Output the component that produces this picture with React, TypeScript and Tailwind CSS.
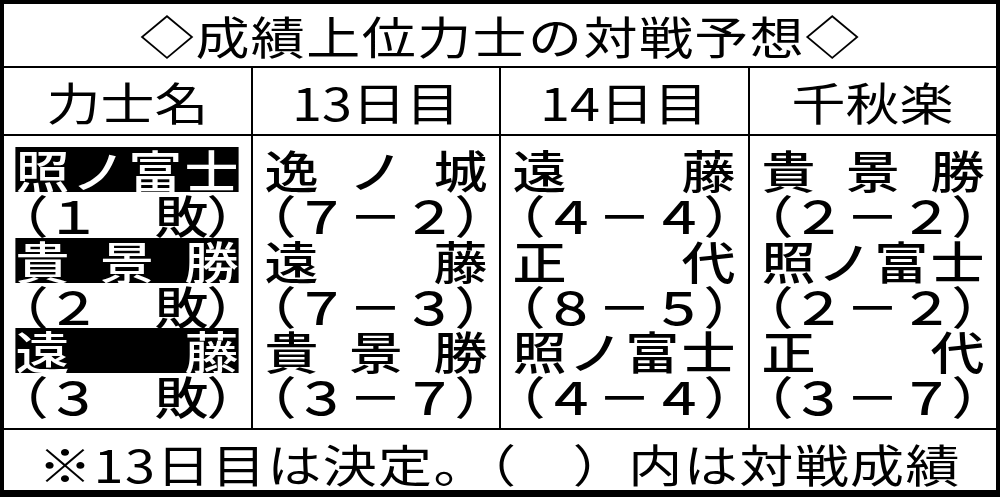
import clsx from "clsx";

type Line =
  | { kind: "name"; chars: string[]; hl?: boolean }
  | { kind: "score"; a: string; mid: string; b: string };

const name = (s: string, hl = false): Line => ({ kind: "name", chars: s.split(""), hl });
const score = (a: string, b: string, mid = "－"): Line => ({ kind: "score", a, mid, b });

const headers = ["力士名", "13日目", "14日目", "千秋楽"];

const columns: Line[][] = [
  [
    name("照ノ富士", true),
    score("１", "敗", ""),
    name("貴景勝", true),
    score("２", "敗", ""),
    name("遠藤", true),
    score("３", "敗", ""),
  ],
  [name("逸ノ城"), score("７", "２"), name("遠藤"), score("７", "３"), name("貴景勝"), score("３", "７")],
  [name("遠藤"), score("４", "４"), name("正代"), score("８", "５"), name("照ノ富士"), score("４", "４")],
  [name("貴景勝"), score("２", "２"), name("照ノ富士"), score("２", "２"), name("正代"), score("３", "７")],
];

function BodyLine({ line }: { line: Line }) {
  if (line.kind === "name") {
    return (
      <div
        className={clsx(
          "flex h-[45.25px] w-[186px] scale-x-[1.2] items-center justify-between leading-none",
          line.hl && "bg-black text-white"
        )}
      >
        {line.chars.map((c, i) => (
          <span key={i} className="w-[45px] text-center">
            {c}
          </span>
        ))}
      </div>
    );
  }
  return (
    <div className="flex h-[45.25px] scale-x-[1.2] items-center justify-center leading-none">
      <span className="w-[26px] text-right [font-feature-settings:'palt']">（</span>
      <span className="w-[45px] text-center">{line.a}</span>
      <span className="w-[45px] text-center">{line.mid}</span>
      <span className="w-[45px] text-center">{line.b}</span>
      <span className="w-[26px] text-left [font-feature-settings:'palt']">）</span>
    </div>
  );
}

export default function App() {
  return (
    <div className="h-[497px] w-[1000px] border-t-4 border-r-4 border-b-[7px] border-l-4 border-black bg-black font-['Noto_Sans_CJK_JP',sans-serif] text-[45px] text-black">
      <div className="flex h-full flex-col gap-[2px]">
        <div className="flex h-[62px] items-center justify-center bg-white">
          <span className="inline-block scale-x-[1.2] leading-none tracking-[1.2px]">◇成績上位力士の対戦予想◇</span>
        </div>

        <div className="grid h-[66px] grid-cols-4 gap-[2px]">
          {headers.map((h) => (
            <div key={h} className="flex items-center justify-center bg-white">
              <span className="inline-block scale-x-[1.2] leading-none">{h}</span>
            </div>
          ))}
        </div>

        <div className="grid h-[292px] grid-cols-4 gap-[2px]">
          {columns.map((col, ci) => (
            <div key={ci} className="flex flex-col items-center bg-white pt-[11px] font-medium">
              {col.map((line, li) => (
                <BodyLine key={li} line={line} />
              ))}
            </div>
          ))}
        </div>

        <div className="flex flex-1 items-center justify-center bg-white pt-[6px]">
          <span className="inline-block scale-x-[1.2] leading-none tracking-[1.2px]">※13日目は決定。（　）内は対戦成績</span>
        </div>
      </div>
    </div>
  );
}
